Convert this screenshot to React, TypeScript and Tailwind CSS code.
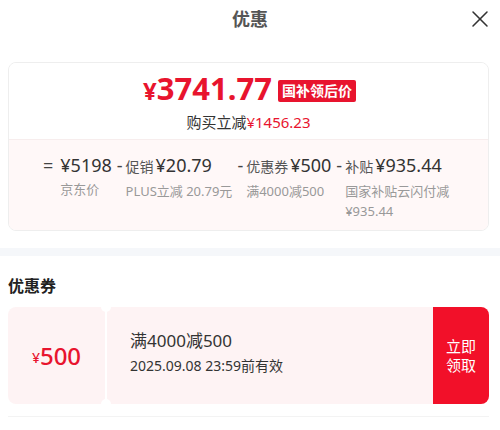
import { X } from 'lucide-react';

const font = { fontFamily: '"Noto Sans", "Noto Sans CJK SC", sans-serif' };

const items = [
  { op: '=', label: '', value: '¥5198', sub: '京东价' },
  { op: '-', label: '促销', value: '¥20.79', sub: 'PLUS立减 20.79元' },
  { op: '-', label: '优惠券', value: '¥500', sub: '满4000减500' },
  { op: '-', label: '补贴', value: '¥935.44', sub: '国家补贴云闪付减 ¥935.44' },
];

export default function App() {
  return (
    <div className="w-[500px] h-[430px] bg-white overflow-hidden text-[#333]" style={font}>
      {/* Header */}
      <div className="relative h-[38px] flex items-center justify-center">
        <h1 className="text-[18px] font-bold text-[#555]">优惠</h1>
        <X className="absolute left-[466px] top-[5px] w-[28px] h-[28px] text-[#333]" strokeWidth={1.3} />
      </div>

      {/* Price card */}
      <div className="ml-2 mr-[11px] mt-[24px] rounded-lg border border-[#eeeeee] overflow-hidden">
        <div className="bg-white h-[76px] flex flex-col items-center pt-[10px]">
          <div className="flex items-center gap-[6px] pl-[2px]">
            <span className="text-[#e8142e] font-bold leading-none">
              <span className="text-[24px]">¥</span>
              <span className="text-[31px]">3741.77</span>
            </span>
            <span className="bg-[#e8142e] text-white text-[14px] font-bold px-[4px] h-[22px] leading-[22px] rounded-[2px] mt-[4px]">国补领后价</span>
          </div>
          <div className="text-[15px] leading-[20px] mt-[8px]">
            购买立减<span className="text-[#e8142e]">¥1456.23</span>
          </div>
        </div>
        <div className="bg-[#fff8f8] border-t border-[#f7eded] h-[91px] pl-[34px] pt-[12px] flex items-start gap-[5px]">
          {items.map((it, i) => (
            <div key={i} className="flex items-start">
              <span className={`text-[18px] leading-[26px] text-[#444] ${it.op === '=' ? 'mr-[7px]' : 'mr-[3px]'}`}>{it.op}</span>
              <div className={i === 3 ? 'w-[108px]' : ''}>
                <div className="flex items-baseline gap-[2px] leading-[26px]">
                  {it.label && <span className="text-[14px] text-[#555]">{it.label}</span>}
                  <span className="text-[18px] text-[#333]">{it.value}</span>
                </div>
                <div className="text-[13px] leading-[20px] text-[#999] mt-[1px]">{it.sub}</div>
              </div>
            </div>
          ))}
        </div>
      </div>

      {/* Divider band */}
      <div className="h-[8px] bg-[#f5f7fa] mt-[17px]" />

      {/* Coupon section */}
      <h2 className="px-2 mt-[20px] text-[16px] font-bold leading-[20px] text-[#222]">优惠券</h2>
      <div className="ml-2 mr-[11px] mt-[11px] h-[97px] flex gap-[2px] relative">
        <div className="w-[97px] bg-[#fef3f4] rounded-l-lg flex items-center justify-center text-[#e8142e] font-medium">
          <span className="text-[14px] mt-[4px]">¥</span>
          <span className="text-[24px]">500</span>
        </div>
        <span className="absolute left-[93px] -top-[5px] w-[10px] h-[10px] rounded-full bg-white" />
        <span className="absolute left-[93px] -bottom-[5px] w-[10px] h-[10px] rounded-full bg-white" />
        <div className="flex-1 bg-[#fef3f4] flex flex-col justify-center pl-[23px] pb-[6px]">
          <div className="text-[17px] leading-[24px] text-[#333]">满4000减500</div>
          <div className="text-[14px] leading-[22px] text-[#333] mt-[2px]">2025.09.08 23:59前有效</div>
        </div>
        <div className="w-[56px] -ml-[2px] bg-[#f21029] rounded-r-lg flex flex-col items-center justify-center text-white text-[15px] leading-[19px]">
          <span>立即</span>
          <span>领取</span>
        </div>
      </div>
      <div className="ml-2 mr-[11px] mt-[12px] h-px bg-[#f3f3f3]" />
    </div>
  );
}
